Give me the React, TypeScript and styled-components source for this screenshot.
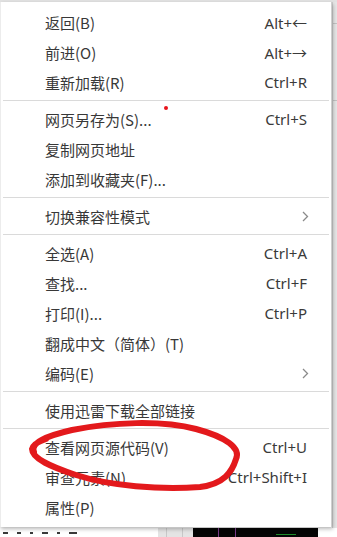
import styled, { createGlobalStyle } from "styled-components";

const GlobalStyle = createGlobalStyle`
  html, body {
    margin: 0;
    padding: 0;
    background: #ffffff;
  }
  body {
    font-family: "Noto Sans CJK SC", "Noto Sans", sans-serif;
  }
`;

const Screen = styled.div`
  position: relative;
  width: 337px;
  height: 537px;
  overflow: hidden;
  background: #ffffff;
`;

// the page behind the menu
const Backdrop = styled.div`
  display: flex;
  flex-direction: column;
  height: 100%;
`;

const TopStrip = styled.div`
  height: 2px;
  background: #e2e2e2;
`;

const Middle = styled.div`
  flex: 1;
  display: flex;
`;

const Blank = styled.div`
  flex: 1;
  background: #fafafa;
`;

const SideStrip = styled.div`
  width: 5px;
  background: #e6e6e6;
  border-left: 1px solid #cfcfcf;
  display: flex;
  flex-direction: column;
  gap: 76px;
  padding-top: 21px;
  box-sizing: border-box;
`;

const SideTick = styled.div`
  height: 1px;
  background: #c4c4c4;
`;

const BottomBar = styled.div`
  height: 9px;
  display: flex;
  background: #ffffff;
`;

// tops of the page's text, cut off by the window edge
const Fragments = styled.div`
  width: 158px;
  display: flex;
  align-items: flex-start;
  gap: 9px;
  padding: 4px 0 0 3px;
  box-sizing: border-box;
`;

const Bit = styled.div<{ w: number }>`
  width: ${(p) => p.w}px;
  height: 2px;
  background: #3a3a3a;
`;

const GrayCells = styled.div`
  width: 35px;
  display: flex;
  background: #e4e4e4;
`;

const Cell = styled.div<{ w: number }>`
  width: ${(p) => p.w}px;
  border-right: 1px solid #c8c8c8;
`;

const BlackBox = styled.div`
  width: 125px;
  background: #050505;
  display: flex;
  align-items: flex-start;
  padding-left: 25px;
  gap: 40px;
  box-sizing: border-box;
`;

const PurpleMark = styled.div`
  width: 18px;
  height: 9px;
  border-left: 1px solid #7a3a8a;
  border-right: 1px solid #7a3a8a;
  box-sizing: border-box;
`;

const GreenMark = styled.div`
  width: 20px;
  height: 1px;
  margin-top: 6px;
  background: #1f8a2a;
`;

const Menu = styled.div`
  position: absolute;
  left: 0;
  top: 2px;
  width: 332px;
  box-sizing: border-box;
  padding: 5px 0;
  background: #ffffff;
  border-left: 1px solid #ececec;
  border-right: 1px solid #cfcfcf;
  box-shadow: 1px 2px 4px rgba(0, 0, 0, 0.28);
`;

const Item = styled.div`
  height: 30px;
  display: flex;
  align-items: center;
  justify-content: space-between;
  padding: 0 24px 0 44px;
  font-size: 15px;
  color: #383838;
  white-space: nowrap;
`;

const Label = styled.span`
  font-family: "Noto Sans CJK SC", sans-serif;
`;

const Key = styled.span`
  font-family: "Noto Sans", "Noto Sans CJK SC", sans-serif;
  font-size: 15px;
  color: #3a3a3a;
`;

const Separator = styled.div`
  height: 7px;
  display: flex;
  align-items: center;
  padding: 0 2px;
  &::after {
    content: "";
    flex: 1;
    height: 1px;
    background: #dadada;
  }
`;

const Chevron = () => (
  <svg width="7" height="11" viewBox="0 0 7 11" style={{ marginRight: -2 }}>
    <polyline points="1,1 5.5,5.5 1,10" fill="none" stroke="#8a8a8a" strokeWidth="1.3" />
  </svg>
);

const Dot = styled.div`
  position: absolute;
  left: 164px;
  top: 106px;
  width: 4px;
  height: 4px;
  border-radius: 50%;
  background: #e8141b;
`;

const Scribble = styled.svg`
  position: absolute;
  left: 0;
  top: 0;
  pointer-events: none;
`;

type Entry = { label?: string; keys?: string; sub?: boolean; sep?: boolean };

const entries: Entry[] = [
  { label: "返回(B)", keys: "Alt+←" },
  { label: "前进(O)", keys: "Alt+→" },
  { label: "重新加载(R)", keys: "Ctrl+R" },
  { sep: true },
  { label: "网页另存为(S)...", keys: "Ctrl+S" },
  { label: "复制网页地址" },
  { label: "添加到收藏夹(F)..." },
  { sep: true },
  { label: "切换兼容性模式", sub: true },
  { sep: true },
  { label: "全选(A)", keys: "Ctrl+A" },
  { label: "查找...", keys: "Ctrl+F" },
  { label: "打印(I)...", keys: "Ctrl+P" },
  { label: "翻成中文（简体）(T)" },
  { label: "编码(E)", sub: true },
  { sep: true },
  { label: "使用迅雷下载全部链接" },
  { sep: true },
  { label: "查看网页源代码(V)", keys: "Ctrl+U" },
  { label: "审查元素(N)", keys: "Ctrl+Shift+I" },
  { label: "属性(P)" },
];

export default function App() {
  return (
    <>
      <GlobalStyle />
      <Screen>
        <Backdrop>
          <TopStrip />
          <Middle>
            <Blank />
            <SideStrip>
              <SideTick />
              <SideTick />
            </SideStrip>
          </Middle>
          <BottomBar>
            <Fragments>
              <Bit w={5} />
              <Bit w={4} />
              <Bit w={3} />
              <Bit w={6} />
              <Bit w={3} />
              <Bit w={8} />
            </Fragments>
            <GrayCells>
              <Cell w={8} />
              <Cell w={15} />
            </GrayCells>
            <BlackBox>
              <PurpleMark />
              <GreenMark />
            </BlackBox>
          </BottomBar>
        </Backdrop>

        <Menu>
          {entries.map((e, i) =>
            e.sep ? (
              <Separator key={i} />
            ) : (
              <Item key={i}>
                <Label>{e.label}</Label>
                {e.keys && <Key>{e.keys}</Key>}
                {e.sub && <Chevron />}
              </Item>
            )
          )}
        </Menu>

        <Dot />
        <Scribble width="337" height="537" viewBox="0 0 337 537">
          <path
            d="M 34 452 C 30 443, 46 436, 72 430 C 112 422, 162 420, 196 429 C 226 437, 241 448, 236 459 C 232 472, 224 484, 200 487 C 160 490, 110 486, 76 475 C 52 467, 32 459, 32 449 C 33 444, 40 441, 46 439"
            fill="none"
            stroke="#e3191c"
            strokeWidth="6"
            strokeLinecap="round"
            strokeLinejoin="round"
          />
        </Scribble>
      </Screen>
    </>
  );
}
